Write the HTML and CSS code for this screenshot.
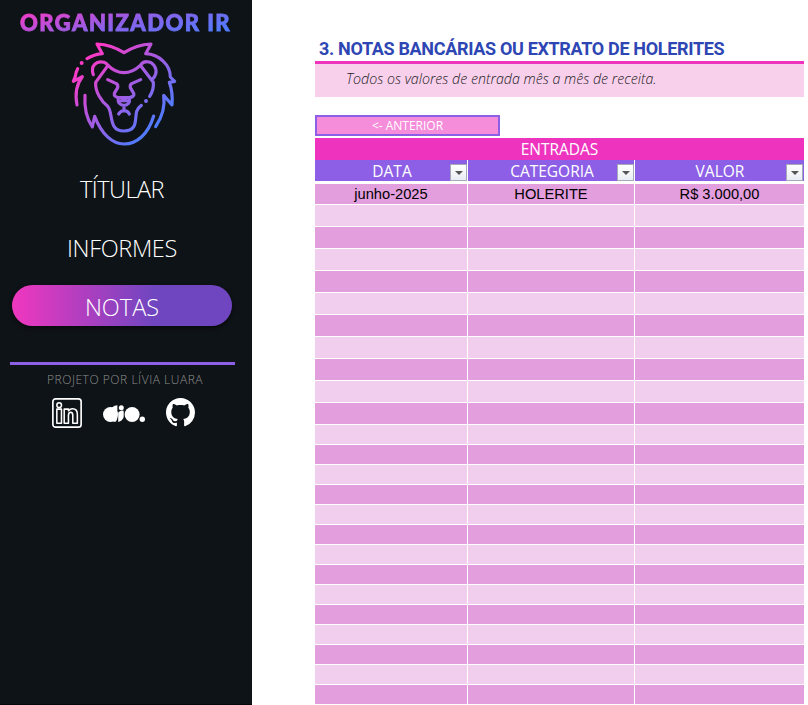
FILE: index.html
```html
<!DOCTYPE html>
<html lang="pt-BR">
<head>
<meta charset="utf-8">
<title>Organizador IR</title>
<link rel="stylesheet" href="styles.css">
</head>
<body>
<aside class="sidebar">
  <div class="brand"><span class="brand-text">ORGANIZADOR IR</span></div>
  <svg class="lion" viewBox="0 0 372 360" fill="none" stroke="url(#lg)" stroke-width="9.5" stroke-linecap="round" stroke-linejoin="round">
    <defs><linearGradient id="lg" gradientUnits="userSpaceOnUse" x1="75" y1="65" x2="285" y2="275"><stop offset="0" stop-color="#ff38c4"/><stop offset="1" stop-color="#4d7dff"/></linearGradient></defs>
    <path d="M75 74Q96 61 121 59L105 30Q148 32 186 56Q224 32 267 30L251 59C292 61 325 93 325 129L338 142L322 145Q333 174 330 213L305 184Q312 232 281 278"/>
    <path d="M47 104Q41 115 40 127M40 127L34 142L61 128C42 152 39 181 45 213"/>
    <path d="M69 184Q65 239 91 279L98 247C119 301 151 330 186 330C224 330 258 302 275 246"/>
    <path d="M94 122C84 95 104 79 126 85Q134 88 138 94L101 145C99 174 118 201 137 217C155 236 137 291 186 291C228 291 218 255 224 232Q229 220 238 214"/>
    <path d="M138 94Q160 116 186 116Q212 116 235 94C245 79 266 80 276 94C289 112 279 129 270 137M235 94L274 145Q276 167 263 187"/>
    <path d="M137 137L163 149Q169 153 167 161L157 178C155 186 163 190 170 191L202 191C209 190 218 186 215 178L205 161Q203 153 209 149L236 137"/>
    <path d="M169 193C166 206 176 214 186 214C197 214 205 206 202 193M178 200H194M186 214V231M170 240Q178 228 186 231Q196 228 202 240"/>
    <g fill="url(#lg)" stroke="none"><circle cx="59" cy="87" r="6"/><circle cx="252" cy="201" r="6"/></g>
  </svg>
  <nav class="menu">
    <a class="item t1"><span>TÍTULAR</span></a>
    <a class="item t2"><span>INFORMES</span></a>
    <a class="item active t3"><span>NOTAS</span></a>
  </nav>
  <div class="rule"></div>
  <div class="credit"><span>PROJETO POR LÍVIA LUARA</span></div>
  <div class="social">
    <svg class="in" viewBox="0 0 31 31" fill="none" stroke="#fff"><rect x=".9" y=".9" width="29.2" height="29.2" rx="2.8" stroke-width="1.7"/><g stroke-width="1.6" stroke-linejoin="round"><circle cx="7.4" cy="7.4" r="2.4"/><path d="M5 11.500h4.800v14.500H5zM12.600 11.500h4.400v1.800c1-1.400 2.500-2.200 4.300-2.200 3.600 0 4.900 2.300 4.900 5.700v9.200h-4.700v-7.900c0-1.900-.3-3.400-2.100-3.400s-2.400 1.500-2.400 3.400v7.900h-4.400z"/></g></svg>
    <svg class="dio" viewBox="0 0 42 18" fill="#fff"><circle cx="7.500" cy="9.500" r="7.500"/><path d="M9 2.500Q11.500.2 14.400.2V13Q13.800 16 12 17L7 15z"/><path d="M15.200 7.500Q18 4.700 20.700 5.800V12Q19.500 15.800 15.200 17z"/><circle cx="18.300" cy="2.700" r="2.500"/><circle cx="29.100" cy="9.500" r="7.500"/><circle cx="39.300" cy="14.200" r="2.700"/></svg>
    <svg class="gh" viewBox="0 0 16 16" fill="#fff"><path d="M8 0C3.580 0 0 3.580 0 8c0 3.540 2.290 6.530 5.470 7.590.4.070.55-.17.55-.38 0-.19-.01-.82-.01-1.490-2.010.37-2.530-.49-2.690-.94-.09-.23-.48-.94-.82-1.130-.28-.15-.68-.52-.01-.53.63-.01 1.080.58 1.230.82.72 1.210 1.870.87 2.330.66.07-.52.28-.87.51-1.070-1.780-.2-3.640-.89-3.640-3.950 0-.87.31-1.590.82-2.150-.08-.2-.36-1.020.08-2.120 0 0 .67-.21 2.200.82.64-.18 1.320-.27 2-.27s1.360.09 2 .27c1.530-1.040 2.200-.82 2.200-.82.44 1.100.16 1.920.08 2.120.51.56.82 1.270.82 2.150 0 3.070-1.870 3.750-3.650 3.950.29.25.54.73.54 1.480 0 1.070-.01 1.930-.01 2.200 0 .21.15.46.55.38A8.010 8.010 0 0 0 16 8c0-4.420-3.580-8-8-8z"/></svg>
  </div>
</aside>
<main class="content">
  <h1 class="title"><span>3. NOTAS BANCÁRIAS OU EXTRATO DE HOLERITES</span></h1>
  <p class="subtitle"><span>Todos os valores de entrada mês a mês de receita.</span></p>
  <a class="back"><span>&lt;- ANTERIOR</span></a>
  <section class="sheet">
    <div class="caption"><span>ENTRADAS</span></div>
    <div class="row head">
      <div><span>DATA</span><i class="filter"></i></div>
      <div><span>CATEGORIA</span><i class="filter"></i></div>
      <div><span>VALOR</span><i class="filter"></i></div>
    </div>
    <div class="row first"><div><span>junho-2025</span></div><div><span>HOLERITE</span></div><div><span>R$ 3.000,00</span></div></div>
    <div class="row tall"><div></div><div></div><div></div></div>
    <div class="row tall"><div></div><div></div><div></div></div>
    <div class="row tall"><div></div><div></div><div></div></div>
    <div class="row tall"><div></div><div></div><div></div></div>
    <div class="row tall"><div></div><div></div><div></div></div>
    <div class="row tall"><div></div><div></div><div></div></div>
    <div class="row tall"><div></div><div></div><div></div></div>
    <div class="row tall"><div></div><div></div><div></div></div>
    <div class="row tall"><div></div><div></div><div></div></div>
    <div class="row tall"><div></div><div></div><div></div></div>
    <div class="row"><div></div><div></div><div></div></div>
    <div class="row"><div></div><div></div><div></div></div>
    <div class="row"><div></div><div></div><div></div></div>
    <div class="row"><div></div><div></div><div></div></div>
    <div class="row"><div></div><div></div><div></div></div>
    <div class="row"><div></div><div></div><div></div></div>
    <div class="row"><div></div><div></div><div></div></div>
    <div class="row"><div></div><div></div><div></div></div>
    <div class="row"><div></div><div></div><div></div></div>
    <div class="row"><div></div><div></div><div></div></div>
    <div class="row"><div></div><div></div><div></div></div>
    <div class="row"><div></div><div></div><div></div></div>
    <div class="row"><div></div><div></div><div></div></div>
    <div class="row"><div></div><div></div><div></div></div>
  </section>
</main>
</body>
</html>
```
FILE: styles.css
```css
* { box-sizing: border-box; }
body { margin: 0; display: flex; width: 808px; height: 705px; overflow: hidden; background: #fff; font-family: "Open Sans", sans-serif; white-space: nowrap; }
.sidebar { width: 252px; height: 705px; background: #0e1317; border-bottom: 1px solid #05070a; display: flex; flex-direction: column; flex: none; }
.brand { height: 34px; padding: 9px 0 0 20px; }
.brand-text { display: inline-block; font: 900 22px/28px Lato, sans-serif; letter-spacing: 1.46px; -webkit-text-stroke: .9px transparent; background: linear-gradient(165deg, #ff38c4 0%, #8a62ea 50%, #4d7dff 92%); -webkit-background-clip: text; background-clip: text; color: transparent; }
.lion { width: 124px; height: 120px; margin-left: 62px; }
.menu { display: flex; flex-direction: column; gap: 18px; padding: 13px 0 0 12px; }
.item { width: 220px; height: 41px; border-radius: 21px; color: #fff; font-size: 23.500px; font-weight: 300; line-height: 45px; text-align: center; }
.t1 { letter-spacing: -.5px; }
.t2 { letter-spacing: -.35px; }
.active { background: linear-gradient(90deg, #f037bf 0%, #6f46c0 65%); box-shadow: 0 2px 4px #0008; }
.rule { height: 3px; width: 225px; margin: 36px 0 0 10px; background: #8d5fe6; }
.credit { height: 31px; padding-left: 47px; font-size: 12px; font-weight: 300; letter-spacing: .54px; line-height: 29px; color: #8f8f8f; }
.social { display: flex; align-items: center; height: 32px; padding-left: 52px; margin-top: 1px; }
.in { width: 30px; height: 30px; margin-top: -1px; }
.dio { width: 42px; height: 18px; margin: 2px 0 0 21px; }
.gh { width: 29px; height: 29px; margin: -1px 0 0 21px; }
.content { margin-left: 63px; width: 489px; display: flex; flex-direction: column; }
.title { margin: 0; height: 64px; padding: 36px 0 0 4px; border-bottom: 3px solid #ee34bf; color: #2e46b4; font: 700 18px/26px Roboto, sans-serif; letter-spacing: -.33px; }
.subtitle { margin: 0; height: 33px; padding-left: 31px; background: #f9d0ec; color: #222; font-size: 14.230px; font-style: italic; font-weight: 300; line-height: 29px; }
.back { margin-top: 18px; width: 185px; height: 21px; border: 2px solid #8d5fe6; background: #f58dda; color: #fff; font-size: 12px; line-height: 18px; text-align: center; }
.sheet { margin-top: 2px; }
.caption { height: 22px; background: #ee34bf; color: #fff; font-size: 15.500px; line-height: 23px; text-align: center; }
.row { display: grid; grid-template-columns: 152px 166px 169px; column-gap: 1px; height: 20px; padding-bottom: 1px; background: #fff; }
.row > div { background: #f2ceee; text-align: center; }
.row:nth-child(odd) > div { background: #e39edd; }
.tall { height: 22px; }
.first { height: 21px; font: 14.670px/20px "Liberation Sans", sans-serif; color: #000; }
.row.head { height: 24px; padding-bottom: 3px; background: linear-gradient(#fff, #fff); }
.row.head > div { height: 21px; display: flex; align-items: flex-start; background: #8d5fe6; color: #fff; font-size: 15.500px; }
.head span { flex: 1; padding-left: 19px; line-height: 23px; height: 21px; }
.filter { width: 17px; height: 17px; margin-top: 4px; border: 1px solid #a3abb8; background: linear-gradient(#fff, #e9edf3); display: flex; justify-content: center; align-items: center; }
.filter::after { content: ""; border: 4px solid transparent; border-top-color: #555; border-bottom: 0; }
.head > div:last-child .filter { margin-right: 1px; }
```
